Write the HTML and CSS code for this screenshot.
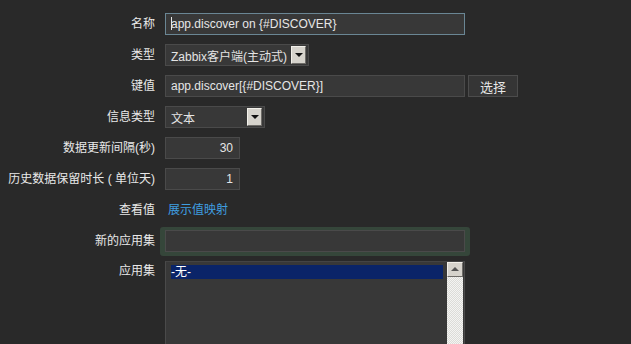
FILE: index.html
```html
<!DOCTYPE html>
<html lang="zh-CN">
<head>
    <meta charset="UTF-8">
    <title>监控项原型</title>
    <link rel="stylesheet" href="styles.css">
</head>
<body>
    <form class="item-form">
        <label class="form-label">名称</label>
        <div class="field">
            <div class="text-input wide focused"><span class="caret"></span>app.discover on {#DISCOVER}</div>
        </div>

        <label class="form-label">类型</label>
        <div class="field">
            <div class="select type-select">
                <span class="select-value">Zabbix客户端(主动式)</span>
                <span class="select-arrow"></span>
            </div>
        </div>

        <label class="form-label">键值</label>
        <div class="field">
            <div class="text-input wide">app.discover[{#DISCOVER}]</div>
            <button type="button" class="btn">选择</button>
        </div>

        <label class="form-label">信息类型</label>
        <div class="field">
            <div class="select info-select">
                <span class="select-value">文本</span>
                <span class="select-arrow"></span>
            </div>
        </div>

        <label class="form-label">数据更新间隔(秒)</label>
        <div class="field">
            <div class="text-input number">30</div>
        </div>

        <label class="form-label">历史数据保留时长 ( 单位天)</label>
        <div class="field">
            <div class="text-input number">1</div>
        </div>

        <label class="form-label">查看值</label>
        <div class="field">
            <a class="link">展示值映射</a>
        </div>

        <label class="form-label">新的应用集</label>
        <div class="field">
            <div class="highlight">
                <div class="text-input wide"></div>
            </div>
        </div>

        <label class="form-label top">应用集</label>
        <div class="field top">
            <div class="listbox">
                <div class="list-items">
                    <div class="list-item selected">-无-</div>
                </div>
                <div class="scrollbar">
                    <span class="scroll-up"></span>
                    <span class="scroll-track"></span>
                </div>
            </div>
        </div>
    </form>
</body>
</html>
```

FILE: styles.css
```css
* {
    margin: 0;
    padding: 0;
    box-sizing: border-box;
}

body {
    background: #292929;
    font-family: "Liberation Sans", "Noto Sans CJK SC", sans-serif;
    font-size: 12px;
    color: #e4e4e4;
    overflow: hidden;
}

.item-form {
    display: grid;
    grid-template-columns: 155px 1fr;
    grid-template-rows: repeat(8, 22px) auto;
    column-gap: 10px;
    row-gap: 9px;
    padding-top: 13px;
}

.form-label {
    text-align: right;
    line-height: 22px;
    white-space: nowrap;
    color: #e8e8e8;
}

.form-label.top {
    line-height: 20px;
}

.field {
    display: flex;
    align-items: center;
    gap: 3px;
}

.field.top {
    align-items: flex-start;
}

.text-input {
    height: 22px;
    line-height: 20px;
    padding: 0 5px;
    background: #383838;
    border: 1px solid #4a4a4a;
    color: #e6e6e6;
    white-space: nowrap;
}

.text-input.wide {
    width: 300px;
}

.text-input.focused {
    border-color: #6a8694;
}

.caret {
    display: inline-block;
    width: 1px;
    height: 13px;
    margin-right: -1px;
    vertical-align: -2px;
    background: #e6e6e6;
}

.text-input.number {
    width: 75px;
    text-align: right;
    padding-right: 6px;
}

.btn {
    width: 50px;
    height: 22px;
    background: #353535;
    border: 1px solid #4c4c4c;
    color: #e6e6e6;
    font: inherit;
    font-size: 13px;
}

.select {
    display: flex;
    align-items: center;
    height: 22px;
    padding: 0 2px 0 5px;
    background: #383838;
    border: 1px solid #4a4a4a;
}

.type-select {
    width: 144px;
}

.info-select {
    width: 100px;
}

.select-value {
    flex: 1;
    white-space: nowrap;
}

.select-arrow {
    width: 15px;
    height: 18px;
    background: #d6d3cc;
    border: 1px solid;
    border-color: #f2f0ea #6e6c68 #6e6c68 #f2f0ea;
    position: relative;
}

.select-arrow::after {
    content: "";
    position: absolute;
    left: 3px;
    top: 6px;
    border-left: 4px solid transparent;
    border-right: 4px solid transparent;
    border-top: 4px solid #111;
}

.link {
    color: #3f9ee0;
    margin-left: 3px;
    line-height: 22px;
}

.highlight {
    margin: -3px -5px -4px;
    padding: 3px 5px 4px;
    background: #35463a;
    border-radius: 3px;
}

.listbox {
    display: flex;
    width: 300px;
    height: 90px;
    background: #383838;
    border: 1px solid #4a4a4a;
    border-top-color: #444;
}

.list-items {
    flex: 1;
    padding: 3px 4px 0 5px;
}

.list-item {
    height: 14px;
    line-height: 14px;
    color: #fff;
}

.list-item.selected {
    background: #0a2468;
}

.scrollbar {
    width: 16px;
    display: flex;
    flex-direction: column;
    margin-right: 1px;
}

.scroll-up {
    height: 15px;
    background: #d6d3cc;
    border: 1px solid;
    border-color: #f2f0ea #6e6c68 #6e6c68 #f2f0ea;
    position: relative;
}

.scroll-up::after {
    content: "";
    position: absolute;
    left: 3px;
    top: 4px;
    border-left: 4px solid transparent;
    border-right: 4px solid transparent;
    border-bottom: 4px solid #555;
}

.scroll-track {
    flex: 1;
    background-color: #f4f4f2;
    background-image:
        linear-gradient(45deg, #dcdcd8 25%, transparent 25%, transparent 75%, #dcdcd8 75%),
        linear-gradient(45deg, #dcdcd8 25%, transparent 25%, transparent 75%, #dcdcd8 75%);
    background-size: 2px 2px;
    background-position: 0 0, 1px 1px;
}
```
